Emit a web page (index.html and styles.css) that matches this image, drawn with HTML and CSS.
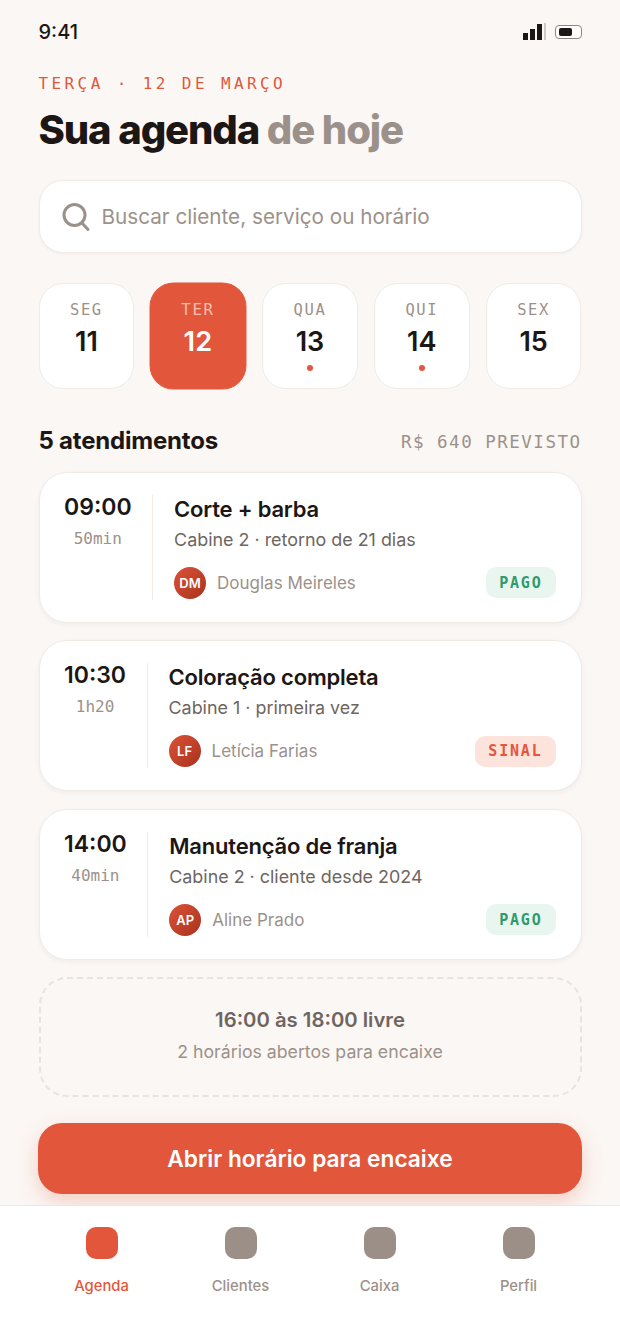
FILE: index.html
```html
<!DOCTYPE html>
<html lang="pt-BR">
    <head>
        <meta charset="utf-8">
        <title>Agenda</title>
        <link rel="stylesheet" href="styles.css">
    </head>
    <body>
        <div class="phone">
            <div class="main">
                <div class="status">
                    <span class="clock">9:41</span>
                    <div class="status-icons">
                        <svg width="24" height="18" viewBox="0 0 24 18">
                            <rect x="0" y="10" width="5" height="7" fill="#1c1614"/>
                            <rect x="7" y="6" width="5" height="11" fill="#1c1614"/>
                            <rect x="14" y="1" width="5" height="16" fill="#1c1614"/>
                            <rect x="21" y="0" width="2" height="17" fill="#cfc9c5"/>
                        </svg>
                        <div class="battery"><div class="battery-fill"></div></div>
                    </div>
                </div>

                <div class="eyebrow">TERÇA · 12 DE MARÇO</div>
                <h1 class="title">Sua agenda <span class="title-soft">de hoje</span></h1>

                <div class="search">
                    <svg width="30" height="30" viewBox="0 0 30 30" fill="none">
                        <circle cx="13.5" cy="13" r="10.5" stroke="#9c918a" stroke-width="3"/>
                        <path d="M21 21l6 6.5" stroke="#9c918a" stroke-width="3" stroke-linecap="round"/>
                    </svg>
                    <span>Buscar cliente, serviço ou horário</span>
                </div>

                <div class="days">
                    <div class="day"><span class="day-name">SEG</span><span class="day-num">11</span></div>
                    <div class="day active"><span class="day-name">TER</span><span class="day-num">12</span></div>
                    <div class="day"><span class="day-name">QUA</span><span class="day-num">13</span><i class="dot"></i></div>
                    <div class="day"><span class="day-name">QUI</span><span class="day-num">14</span><i class="dot"></i></div>
                    <div class="day"><span class="day-name">SEX</span><span class="day-num">15</span></div>
                </div>

                <div class="section-head">
                    <h2>5 atendimentos</h2>
                    <span class="forecast">R$ 640 PREVISTO</span>
                </div>

                <div class="card">
                    <div class="when"><b>09:00</b><span>50min</span></div>
                    <div class="info">
                        <div class="service">Corte + barba</div>
                        <div class="detail">Cabine 2 · retorno de 21 dias</div>
                        <div class="person">
                            <span class="avatar">DM</span>
                            <span class="name">Douglas Meireles</span>
                            <span class="tag paid">PAGO</span>
                        </div>
                    </div>
                </div>

                <div class="card">
                    <div class="when"><b>10:30</b><span>1h20</span></div>
                    <div class="info">
                        <div class="service">Coloração completa</div>
                        <div class="detail">Cabine 1 · primeira vez</div>
                        <div class="person">
                            <span class="avatar">LF</span>
                            <span class="name">Letícia Farias</span>
                            <span class="tag deposit">SINAL</span>
                        </div>
                    </div>
                </div>

                <div class="card">
                    <div class="when"><b>14:00</b><span>40min</span></div>
                    <div class="info">
                        <div class="service">Manutenção de franja</div>
                        <div class="detail">Cabine 2 · cliente desde 2024</div>
                        <div class="person">
                            <span class="avatar">AP</span>
                            <span class="name">Aline Prado</span>
                            <span class="tag paid">PAGO</span>
                        </div>
                    </div>
                </div>

                <div class="free">
                    <div class="free-title">16:00 às 18:00 livre</div>
                    <div class="free-sub">2 horários abertos para encaixe</div>
                </div>

                <button class="cta">Abrir horário para encaixe</button>
            </div>

            <div class="tabs">
                <div class="tab current"><i class="tab-icon"></i><span>Agenda</span></div>
                <div class="tab"><i class="tab-icon"></i><span>Clientes</span></div>
                <div class="tab"><i class="tab-icon"></i><span>Caixa</span></div>
                <div class="tab"><i class="tab-icon"></i><span>Perfil</span></div>
            </div>
        </div>
    </body>
</html>
```

FILE: styles.css
```css
* {
    box-sizing: border-box;
}
html, body {
    margin: 0;
    padding: 0;
}
body {
    font-family: "Inter", "Noto Sans", sans-serif;
    color: #1c1614;
    background: #fbf7f4;
}
.phone {
    width: 620px;
    height: 1342px;
    display: flex;
    flex-direction: column;
    overflow: hidden;
}
.main {
    flex: 1;
    padding: 0 38.5px;
}

/* status bar */
.status {
    height: 64px;
    display: flex;
    align-items: center;
    justify-content: space-between;
}
.clock {
    font-size: 20px;
    font-weight: 500;
}
.status-icons {
    display: flex;
    align-items: center;
    gap: 8px;
}
.battery {
    width: 27px;
    height: 14px;
    border: 1.5px solid #8f8782;
    border-radius: 4px;
    padding: 2px 3px;
    background: #fff;
}
.battery-fill {
    width: 13px;
    height: 100%;
    border-radius: 2px;
    background: #1c1614;
}

/* heading */
.eyebrow {
    font-family: "DejaVu Sans Mono", monospace;
    font-size: 16px;
    line-height: 20px;
    letter-spacing: 3.4px;
    color: #e2573c;
    margin-top: 10px;
}
.title {
    margin: 12px 0 0;
    font-size: 40px;
    line-height: 48px;
    font-weight: 800;
    letter-spacing: -1.1px;
}
.title-soft {
    color: #9c918a;
}

/* search */
.search {
    margin-top: 26px;
    height: 73px;
    display: flex;
    align-items: center;
    gap: 11px;
    padding: 0 21px;
    background: #fff;
    border: 1.5px solid #f0ebe7;
    border-radius: 24px;
    box-shadow: 0 1px 3px rgba(60, 40, 30, 0.05);
    font-size: 20.7px;
    color: #9c918a;
}

/* day strip */
.days {
    margin-top: 30px;
    display: flex;
    gap: 16px;
}
.day {
    flex: 1;
    height: 106px;
    display: flex;
    flex-direction: column;
    align-items: center;
    padding-top: 16px;
    background: #fff;
    border: 1.5px solid #f0ebe7;
    border-radius: 24px;
}
.day-name {
    font-family: "DejaVu Sans Mono", monospace;
    font-size: 15.5px;
    line-height: 20px;
    letter-spacing: 1.6px;
    color: #9c918a;
}
.day-num {
    margin-top: 5px;
    font-size: 27px;
    line-height: 34px;
    font-weight: 600;
}
.dot {
    width: 6px;
    height: 6px;
    margin-top: 6px;
    border-radius: 50%;
    background: #e2573c;
}
.day.active {
    background: #e2573c;
    border-color: #e2573c;
    color: #fff;
    transform: scale(1.01);
}
.day.active .day-name {
    color: #f6bfb1;
}

/* section title */
.section-head {
    margin-top: 35px;
    display: flex;
    align-items: center;
    justify-content: space-between;
    height: 32px;
}
.section-head h2 {
    margin: 0;
    font-size: 24px;
    font-weight: 700;
    letter-spacing: -0.2px;
}
.forecast {
    margin-top: 4px;
    font-family: "DejaVu Sans Mono", monospace;
    font-size: 17.5px;
    letter-spacing: 1.5px;
    color: #9c918a;
}

/* appointment cards */
.card {
    margin-top: 17.5px;
    height: 151px;
    display: flex;
    padding: 22px 25px 22px 24.5px;
    background: #fff;
    border: 1.5px solid #f0ebe7;
    border-radius: 28px;
    box-shadow: 0 2px 5px rgba(60, 40, 30, 0.05);
}
.section-head + .card {
    margin-top: 15.5px;
}
.when {
    display: flex;
    flex-direction: column;
    align-items: center;
    padding-right: 20.5px;
    border-right: 1.5px solid #f0ebe7;
}
.when b {
    margin-top: -2px;
    font-size: 23px;
    line-height: 28px;
    font-weight: 600;
}
.when span {
    margin-top: 8px;
    font-family: "DejaVu Sans Mono", monospace;
    font-size: 16px;
    line-height: 20px;
    color: #9c918a;
}
.info {
    flex: 1;
    padding-left: 21px;
}
.service {
    font-size: 22px;
    line-height: 28px;
    font-weight: 600;
    letter-spacing: -0.2px;
}
.detail {
    margin-top: 4px;
    font-size: 17.9px;
    line-height: 26px;
    color: #6f6560;
}
.person {
    margin-top: 14px;
    display: flex;
    align-items: center;
    gap: 11px;
}
.avatar {
    width: 32px;
    height: 32px;
    border-radius: 50%;
    display: flex;
    align-items: center;
    justify-content: center;
    background: linear-gradient(135deg, #dc5236, #a8321f);
    color: #fff;
    font-size: 13px;
    font-weight: 600;
}
.name {
    flex: 1;
    font-size: 17px;
    color: #9c918a;
}
.tag {
    height: 31px;
    padding: 0 13px;
    display: flex;
    align-items: center;
    border-radius: 10px;
    font-family: "DejaVu Sans Mono", monospace;
    font-size: 15px;
    font-weight: 700;
    letter-spacing: 1.8px;
}
.paid {
    background: #e9f5ef;
    color: #2f9a6c;
}
.deposit {
    background: #fce3dc;
    color: #e2573c;
}

/* free slot */
.free {
    margin-top: 17.5px;
    height: 120px;
    display: flex;
    flex-direction: column;
    align-items: center;
    justify-content: center;
    padding-bottom: 5px;
    border: 2px dashed #e8e3df;
    border-radius: 28px;
}
.free-title {
    font-size: 20.3px;
    font-weight: 600;
    color: #6f6560;
}
.free-sub {
    margin-top: 9px;
    font-size: 17.7px;
    color: #9c918a;
}

/* button */
.cta {
    display: block;
    width: 544px;
    height: 71px;
    margin: 25.5px 0 0 -0.5px;
    border: 0;
    border-radius: 24px;
    background: #e2573c;
    color: #fff;
    font-family: inherit;
    font-size: 22.7px;
    font-weight: 600;
    box-shadow: 0 8px 20px rgba(226, 87, 60, 0.25);
}

/* bottom tabs */
.tabs {
    height: 137px;
    display: grid;
    grid-template-columns: repeat(4, 139px);
    justify-content: center;
    padding: 21px 0 0;
    background: #fff;
    border-top: 1.5px solid #ece7e3;
}
.tab {
    display: flex;
    flex-direction: column;
    align-items: center;
    font-size: 14.8px;
    font-weight: 500;
    color: #9c918a;
}
.tab-icon {
    width: 32px;
    height: 32px;
    border-radius: 10px;
    background: #9c8f87;
    margin-bottom: 18px;
}
.tab.current {
    color: #e2573c;
}
.tab.current .tab-icon {
    background: #e2573c;
}
```
